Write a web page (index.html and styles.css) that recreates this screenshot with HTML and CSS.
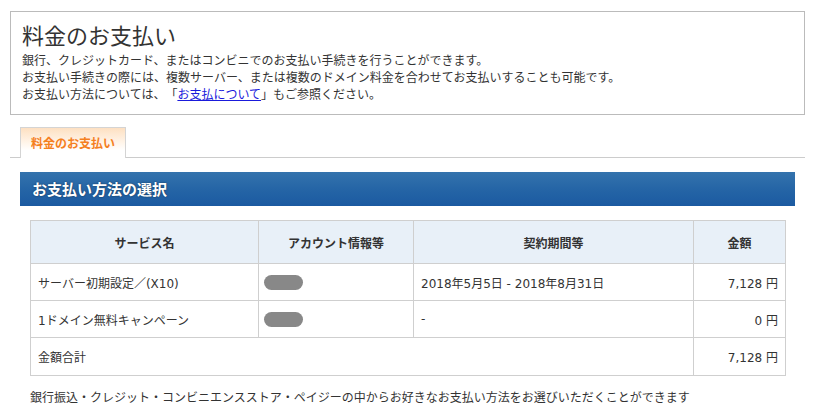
FILE: index.html
```html
<!DOCTYPE html>
<html lang="ja">
<head>
<meta charset="utf-8">
<title>料金のお支払い</title>
<link rel="stylesheet" href="styles.css">
</head>
<body>
<div class="page">
  <div class="intro">
    <h1 class="intro-title">料金のお支払い</h1>
    <p class="intro-text">銀行、クレジットカード、またはコンビニでのお支払い手続きを行うことができます。<br>お支払い手続きの際には、複数サーバー、または複数のドメイン料金を合わせてお支払いすることも可能です。<br>お支払い方法については、「<a href="#" class="intro-link">お支払について</a>」もご参照ください。</p>
  </div>
  <div class="tabs">
    <div class="tab">料金のお支払い</div>
  </div>
  <div class="section">
    <h2 class="section-title">お支払い方法の選択</h2>
    <table class="bill">
      <colgroup><col class="c1"><col class="c2"><col class="c3"><col class="c4"></colgroup>
      <thead>
        <tr><th>サービス名</th><th>アカウント情報等</th><th>契約期間等</th><th>金額</th></tr>
      </thead>
      <tbody>
        <tr><td>サーバー初期設定／(X10)</td><td><span class="mask"></span></td><td>2018年5月5日 - 2018年8月31日</td><td class="amt">7,128 円</td></tr>
        <tr><td>1ドメイン無料キャンペーン</td><td><span class="mask"></span></td><td>-</td><td class="amt">0 円</td></tr>
        <tr class="total"><td colspan="3">金額合計</td><td class="amt">7,128 円</td></tr>
      </tbody>
    </table>
    <p class="note">銀行振込・クレジット・コンビニエンスストア・ペイジーの中からお好きなお支払い方法をお選びいただくことができます</p>
  </div>
</div>
</body>
</html>
```

FILE: styles.css
```css
html, body {
  margin: 0;
  padding: 0;
  background: #fff;
}
body {
  font-family: "Noto Sans CJK JP", "DejaVu Sans", sans-serif;
  color: #333;
  font-size: 12px;
  text-spacing-trim: space-all;
}
.page {
  width: 819px;
  padding-top: 11px;
}
.intro {
  margin-left: 10px;
  width: 793px;
  border: 1px solid #bbb;
  padding: 8px 0 12px 0;
}
.intro-title {
  margin: 0 0 3px 11px;
  font-size: 22px;
  line-height: 28px;
  font-weight: normal;
  color: #333;
}
.intro-text {
  margin: 0 0 0 11px;
  font-size: 12px;
  line-height: 17px;
  color: #333;
}
.intro-link {
  color: #1a1adb;
  text-decoration: underline;
}
.tabs {
  margin: 12px 0 0 10px;
  width: 795px;
  border-bottom: 1px solid #ccc;
  display: flex;
}
.tab {
  margin-left: 10px;
  margin-bottom: -1px;
  width: 104px;
  height: 30px;
  border: 1px solid #d4d4d4;
  border-bottom: none;
  background: linear-gradient(to bottom, #fde0c2 0%, #fff3e6 45%, #ffffff 75%);
  color: #f5801e;
  font-weight: bold;
  font-size: 12px;
  line-height: 30px;
  text-align: center;
}
.section {
  margin: 14px 0 0 20px;
  width: 775px;
}
.section-title {
  margin: 0;
  height: 34px;
  line-height: 33px;
  padding-left: 12px;
  background: linear-gradient(to bottom, #3473ad 0%, #2565a6 50%, #1b5aa1 100%);
  color: #fff;
  font-size: 15px;
  font-weight: bold;
  text-shadow: 0 0 2px rgba(0, 0, 0, 0.55);
}
.bill {
  margin: 14px 0 0 10px;
  width: 755px;
  border-collapse: collapse;
  table-layout: fixed;
  font-family: "DejaVu Sans", "Noto Sans CJK JP", sans-serif;
  font-size: 12px;
  color: #333;
}
.c1 { width: 228px; }
.c2 { width: 155px; }
.c3 { width: 280px; }
.c4 { width: 92px; }
.bill th, .bill td {
  border: 1px solid #cfcfcf;
  padding: 0 7px;
}
.bill th {
  height: 42px;
  background: #e8f0f8;
  font-family: "Noto Sans CJK JP", sans-serif;
  font-weight: bold;
  text-align: center;
  color: #333;
}
.bill td {
  height: 36px;
  text-align: left;
  font-family: "DejaVu Sans", "Noto Sans CJK JP", sans-serif;
}
.bill tr.total td {
  height: 37px;
}
.bill td.amt {
  text-align: right;
}
.mask {
  display: inline-block;
  width: 39px;
  height: 15px;
  border-radius: 8px;
  background: #888;
  vertical-align: middle;
  margin-left: -2px;
}
.note {
  margin: 12px 0 0 10px;
  line-height: 17px;
  font-size: 12px;
  color: #333;
}
```
